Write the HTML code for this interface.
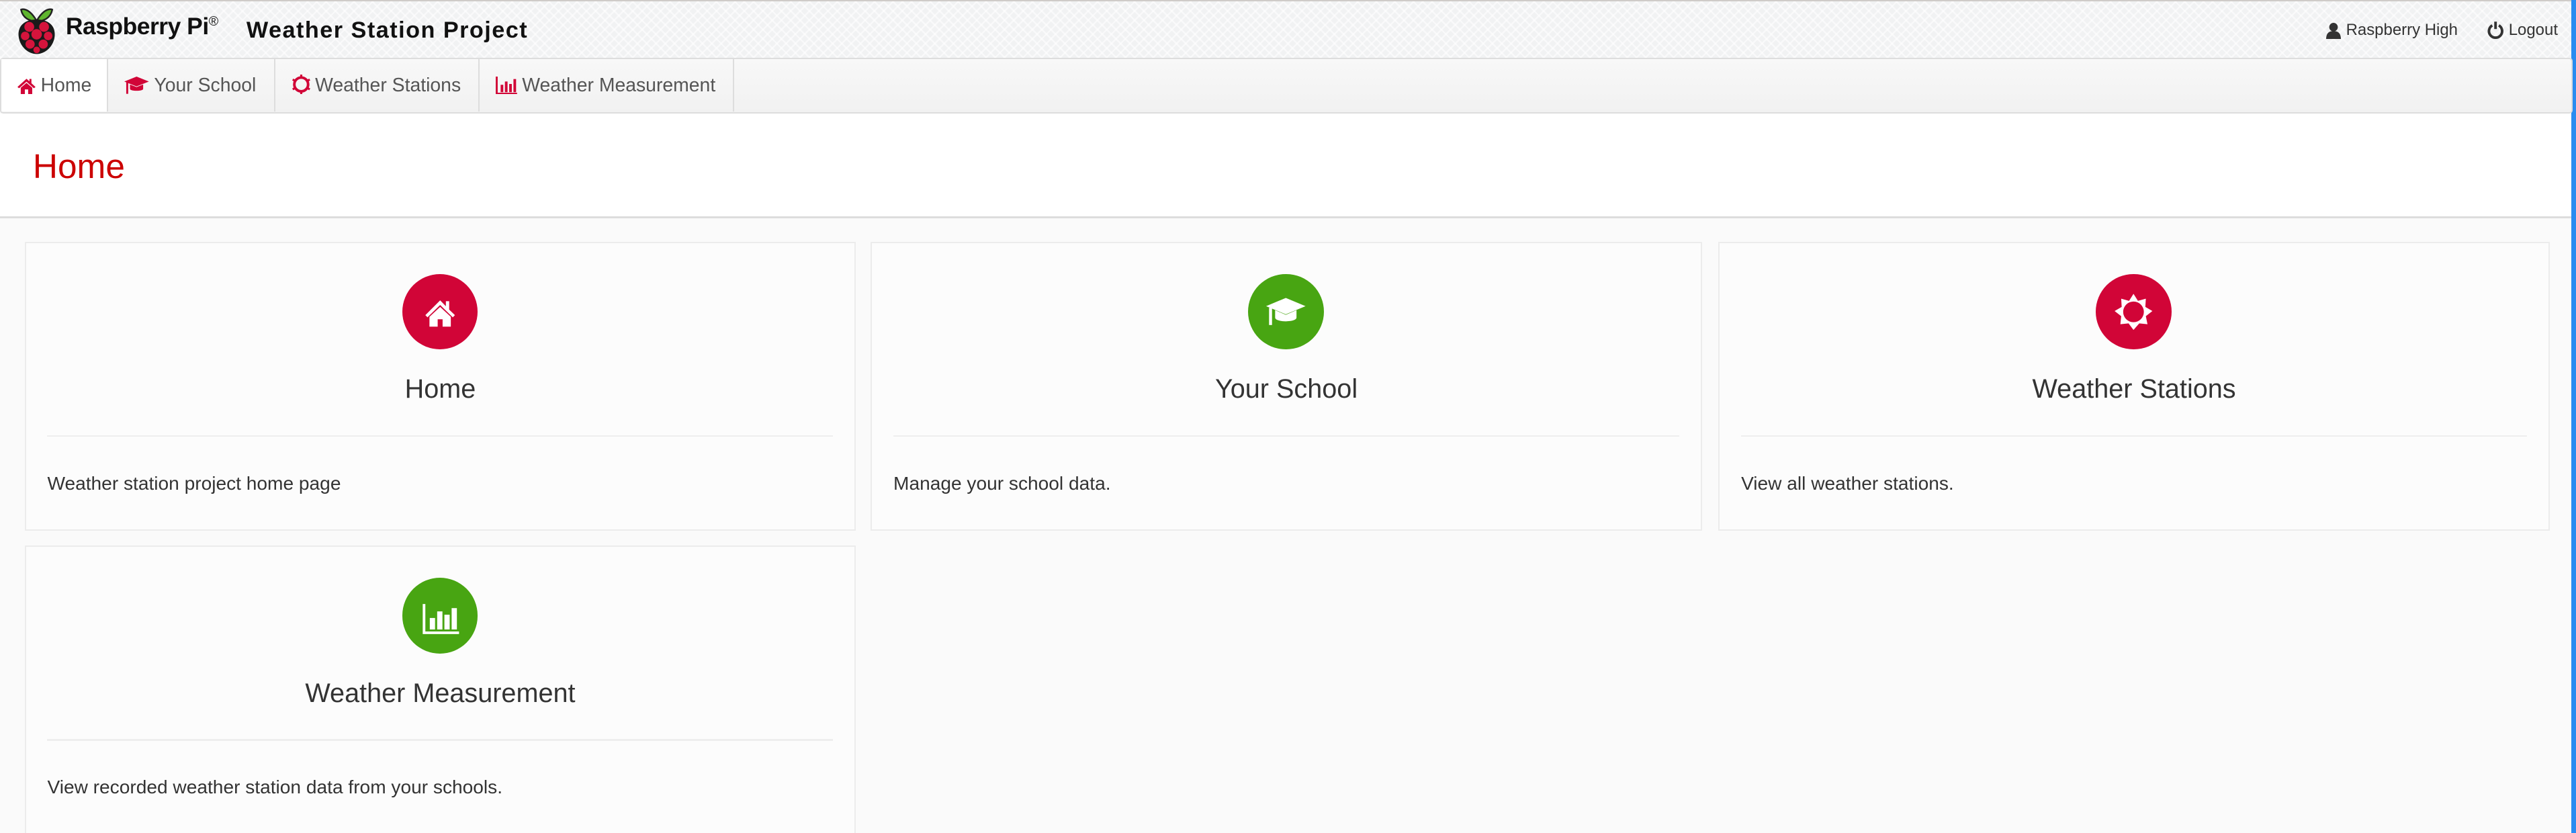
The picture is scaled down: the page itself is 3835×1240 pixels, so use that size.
<!DOCTYPE html>
<html><head><meta charset="utf-8">
<style>
html,body{margin:0;padding:0;}
body{width:3835px;height:1239px;overflow:hidden;background:#fafafa;font-family:"Liberation Sans",Arial,sans-serif;}
#w{zoom:2.44579;width:1568px;height:507px;position:relative;overflow:hidden;background:#fafafa;}
.abs{position:absolute;}
#hdr{left:0;top:0;width:1568px;height:35px;background-color:#f1f2f3;
background-image:repeating-linear-gradient(45deg,rgba(255,255,255,.55) 0 1px,transparent 1px 4px),repeating-linear-gradient(-45deg,rgba(255,255,255,.55) 0 1px,transparent 1px 4px);
border-top:1px solid #cfcbc8;box-sizing:border-box;}
#nav{left:0;top:35px;width:1566px;height:34px;background:linear-gradient(#f8f8f8,#f1f1f1);border:1px solid #ddd;box-sizing:border-box;border-radius:2px;}
.tab{position:absolute;top:0;height:32px;line-height:32px;font-size:11.6px;color:#555;border-right:1px solid #ddd;box-sizing:border-box;}
.tab svg{vertical-align:-2px;margin-right:3px;}
#ph{left:0;top:69px;width:1565px;height:64px;background:#fff;border-bottom:1.5px solid #ddd;box-sizing:border-box;}
.card{position:absolute;width:506px;height:176px;background:#fcfcfc;border:1px solid #ececec;box-sizing:border-box;}
.circ{position:absolute;left:229px;top:19px;width:46px;height:46px;border-radius:50%;}
.ttl{position:absolute;left:0;width:100%;top:80px;text-align:center;font-size:16.2px;color:#333;}
.hr{position:absolute;left:13px;right:13px;top:117px;height:1px;background:#eeeeee;}
.desc{position:absolute;left:13px;top:140px;font-size:11.5px;color:#333;}
.red{background:#d10537;}.grn{background:#48a512;}
</style></head><body><div id="w">
<div id="hdr" class="abs">
 <svg class="abs" style="left:10px;top:2px" width="25" height="31" viewBox="0 0 25 31">
  <path d="M12 9 C7 1 3 3 3 3 C4 8 8 10 12 10Z" fill="#5fb52e" stroke="#222" stroke-width="1"/>
  <path d="M13 9 C18 1 22 3 22 3 C21 8 17 10 13 10Z" fill="#5fb52e" stroke="#222" stroke-width="1"/>
  <path d="M12.5 9 C5 9 1 13 1.5 19 C2 25 7 30 12.5 30 C18 30 23 25 23.5 19 C24 13 20 9 12.5 9Z" fill="#1a1a1a"/>
  <g fill="#d5143c"><circle cx="8" cy="13.5" r="3"/><circle cx="17" cy="13.5" r="3"/><circle cx="12.5" cy="18" r="3.2"/><circle cx="5.5" cy="19" r="2.6"/><circle cx="19.5" cy="19" r="2.6"/><circle cx="8.5" cy="24" r="2.8"/><circle cx="16.5" cy="24" r="2.8"/><circle cx="12.5" cy="27.5" r="2"/></g>
 </svg>
 <div class="abs" style="left:40px;top:7px;font-size:14.5px;color:#111;font-weight:bold;letter-spacing:-0.2px;">Raspberry Pi<sup style="font-size:8px;font-weight:normal;">®</sup></div>
 <div class="abs" style="left:150px;top:10px;font-size:14px;color:#111;font-weight:bold;letter-spacing:0.6px;">Weather Station Project</div>
 <svg class="abs" style="left:1416px;top:13px" width="9" height="10" viewBox="0 0 9 10"><circle cx="4.5" cy="2.6" r="2.6" fill="#333"/><path d="M0 10 C0 6 2 5 4.5 5 C7 5 9 6 9 10Z" fill="#333"/></svg>
 <div class="abs" style="left:1428px;top:12px;font-size:9.8px;color:#333;">Raspberry High</div>
 <svg class="abs" style="left:1514px;top:12px" width="10" height="11" viewBox="0 0 10 11"><path d="M3 2.8 A4 4 0 1 0 7 2.8" fill="none" stroke="#333" stroke-width="1.6"/><path d="M5 0.5 V5" stroke="#333" stroke-width="1.6"/></svg>
 <div class="abs" style="left:1527px;top:12px;font-size:9.8px;color:#333;">Logout</div>
</div>
<div class="abs" style="left:1565px;top:0;width:3px;height:507px;background:#2a8cf0;"></div>
<div id="nav" class="abs">
 <div class="tab" style="left:0;width:65px;background:#fff;padding-left:10px;"><svg width="11" height="10" viewBox="0 0 11 10"><path d="M5.5 0.5 L0 5.5 L1 6.3 L5.5 2.3 L10 6.3 L11 5.5 L8.5 3.2 V0.6 H7.3 V2.1Z" fill="#d10537"/><path d="M2 6 L5.5 3 L9 6 V10 H6.5 V7 H4.5 V10 H2Z" fill="#d10537"/></svg>Home</div>
 <div class="tab" style="left:65px;width:102px;padding-left:10px;"><svg width="15" height="11" viewBox="0 0 15 11"><path d="M7.5 0 L15 3 L7.5 6 L0 3Z" fill="#d10537"/><path d="M3.5 4.8 V7.5 C3.5 9 11.5 9 11.5 7.5 V4.8 L7.5 6.4Z" fill="#d10537"/><path d="M1.8 3.4 V10.5" stroke="#d10537" stroke-width="1.2"/></svg>Your School</div>
 <div class="tab" style="left:167px;width:124px;padding-left:10px;"><svg width="11" height="12" viewBox="0 0 11 12"><circle cx="5.5" cy="6" r="4.2" fill="none" stroke="#d10537" stroke-width="1.6"/><path d="M5.5 0 V1.5 M5.5 10.5 V12 M0.3 3 L1.6 3.7 M9.4 8.3 L10.7 9 M0.3 9 L1.6 8.3 M9.4 3.7 L10.7 3" stroke="#d10537" stroke-width="1.3"/></svg>Weather Stations</div>
 <div class="tab" style="left:291px;width:155px;padding-left:10px;"><svg width="13" height="11" viewBox="0 0 13 11"><path d="M0.6 0 V10.4 H13" fill="none" stroke="#d10537" stroke-width="1.2"/><rect x="3" y="5" width="1.6" height="4.5" fill="#d10537"/><rect x="5.6" y="3" width="1.6" height="6.5" fill="#d10537"/><rect x="8.2" y="4.5" width="1.6" height="5" fill="#d10537"/><rect x="10.8" y="1.5" width="1.6" height="8" fill="#d10537"/></svg>Weather Measurement</div>
</div>
<div id="ph" class="abs"><div class="abs" style="left:20px;top:20px;font-size:21px;color:#c00;">Home</div></div>

<div class="card" style="left:15px;top:147px;">
 <div class="circ red"><svg width="46" height="46" viewBox="0 0 46 46"><path d="M23 16 L14 25 L15.3 26.3 L23 18.8 L30.7 26.3 L32 25 L28.5 21.6 V16.5 H26.5 V19.6Z" fill="#fff"/><path d="M16.5 26 L23 20 L29.5 26 V32 H24.5 V27.5 H21.5 V32 H16.5Z" fill="#fff"/></svg></div>
 <div class="ttl">Home</div><div class="hr"></div>
 <div class="desc">Weather station project home page</div>
</div>
<div class="card" style="left:530px;top:147px;">
 <div class="circ grn"><svg width="46" height="46" viewBox="0 0 46 46"><path d="M23 14.5 L35 19.5 L23 24.5 L11 19.5Z" fill="#fff"/><path d="M16.5 22 V26.5 C16.5 29.5 29.5 29.5 29.5 26.5 V22 L23 24.8Z" fill="#fff"/><path d="M13.7 20.5 V31" stroke="#fff" stroke-width="1.8"/></svg></div>
 <div class="ttl">Your School</div><div class="hr"></div>
 <div class="desc">Manage your school data.</div>
</div>
<div class="card" style="left:1046px;top:147px;">
 <div class="circ red"><svg width="46" height="46" viewBox="0 0 46 46"><path d="M23 12 L25.7 16.3 L30.5 15 L30.2 20 L34.5 22.5 L30.5 25.6 L31.5 30.5 L26.5 30 L23 34 L20 30 L15 30.5 L15.5 25.6 L11.5 22.5 L15.8 20 L15.5 15 L20.3 16.3Z" fill="#fff"/><circle cx="23" cy="23" r="6.3" fill="#d10537"/></svg></div>
 <div class="ttl">Weather Stations</div><div class="hr"></div>
 <div class="desc">View all weather stations.</div>
</div>
<div class="card" style="left:15px;top:332px;height:190px;">
 <div class="circ grn"><svg width="46" height="46" viewBox="0 0 46 46"><path d="M13.2 16 V33.5 H34.5" fill="none" stroke="#fff" stroke-width="1.6"/><rect x="16.7" y="24.5" width="3.2" height="7" fill="#fff"/><rect x="21.2" y="20.5" width="3.2" height="11" fill="#fff"/><rect x="25.6" y="22.5" width="3.2" height="9" fill="#fff"/><rect x="30" y="18.5" width="3.2" height="13" fill="#fff"/></svg></div>
 <div class="ttl">Weather Measurement</div><div class="hr"></div>
 <div class="desc">View recorded weather station data from your schools.</div>
</div>
</div></body></html>
